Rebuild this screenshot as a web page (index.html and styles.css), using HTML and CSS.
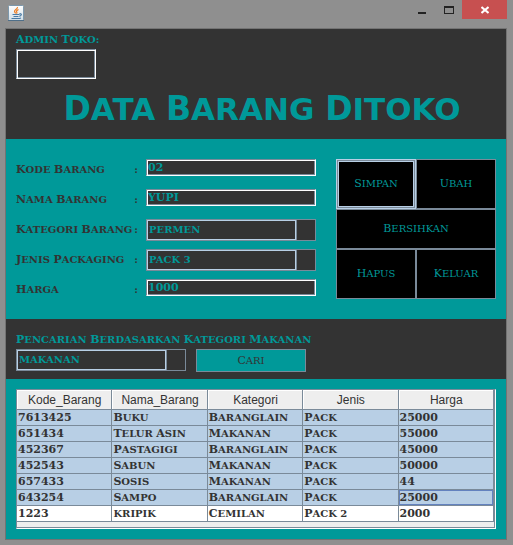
FILE: index.html
```
<!DOCTYPE html>
<html lang="id">
<head>
<meta charset="utf-8">
<title>Data Barang</title>
<link rel="stylesheet" href="styles.css">
</head>
<body>
<div class="titlebar">
  <svg class="java" viewBox="0 0 16 16" role="img" aria-label="Java">
    <defs><linearGradient id="g" x1="0" y1="0" x2="0" y2="1"><stop offset="0" stop-color="#ffffff"/><stop offset="1" stop-color="#cfdde6"/></linearGradient></defs>
    <rect x=".5" y=".5" width="15" height="15" rx="1" fill="url(#g)" stroke="#7d98ac"/>
    <path d="M0 15.5H16" stroke="#4f6f89"/>
    <path d="M9.500 2C10 4 6 5 6.500 6.500C6.700 7.300 7.500 7.800 7.500 8.500M10.500 4.500C8.500 5.500 8 6.200 8.800 7.200C9.200 7.800 8.800 8.300 8.500 8.700" fill="none" stroke="#ee7d22" stroke-width="1.200"/>
    <path d="M4.500 9.500H11.500M5.500 11.500H10.500M11.500 8.700C14.500 8.300 13.500 11 11.300 11.300M3.500 13.500H11.500L13 13" fill="none" stroke="#4a7ba6" stroke-width="1.200"/>
  </svg>
  <div class="controls">
    <button class="ctl" aria-label="Minimize"><svg viewBox="0 0 10 8"><path d="M1 6H9V8H1Z" fill="#222"/></svg></button>
    <button class="ctl" aria-label="Maximize"><svg viewBox="0 0 10 8"><path d="M0 0H10V8H0ZM1 2V7H9V2Z" fill="#222" fill-rule="evenodd"/></svg></button>
    <button class="ctl close" aria-label="Close"><svg viewBox="0 0 8 8"><path d="M.5 1L7.500 7M7.500 1L.5 7" stroke="#fff" stroke-width="2"/></svg></button>
  </div>
</div>
<main class="content">
  <header class="head">
    <label class="caption" for="admin"><span class="w">Admin</span> <span class="w">Toko:</span></label>
    <input class="field admin" id="admin" type="text">
    <h1 class="title"><span class="w">Data</span> <span class="w">Barang</span> <span class="w">Ditoko</span></h1>
  </header>
  <form class="form">
    <div class="fields">
      <div class="row"><label for="kode"><span><span class="w">Kode</span> <span class="w">Barang</span></span><span>:</span></label><input class="field" id="kode" type="text" value="02"></div>
      <div class="row"><label for="nama"><span><span class="w">Nama</span> <span class="w">Barang</span></span><span>:</span></label><input class="field" id="nama" type="text" value="YUPI"></div>
      <div class="row"><label for="kat"><span><span class="w">Kategori</span> <span class="w">Barang</span></span><span>:</span></label><div class="combo"><select id="kat"><option>Permen</option></select></div></div>
      <div class="row"><label for="jenis"><span><span class="w">Jenis</span> <span class="w">Packaging</span></span><span>:</span></label><div class="combo"><select id="jenis"><option>Pack 3</option></select></div></div>
      <div class="row"><label for="harga"><span><span class="w">Harga</span></span><span>:</span></label><input class="field" id="harga" type="text" value="1000"></div>
    </div>
    <div class="actions">
      <button type="button" class="btn focused"><span class="w">Simpan</span></button>
      <button type="button" class="btn"><span class="w">Ubah</span></button>
      <button type="button" class="btn wide"><span class="w">Bersihkan</span></button>
      <button type="button" class="btn"><span class="w">Hapus</span></button>
      <button type="button" class="btn"><span class="w">Keluar</span></button>
    </div>
  </form>
  <section class="search">
    <label class="caption" for="cari"><span class="w">Pencarian</span> <span class="w">Berdasarkan</span> <span class="w">Kategori</span> <span class="w">Makanan</span></label>
    <div class="searchrow">
      <div class="combo"><select id="cari"><option>Makanan</option></select></div>
      <button type="button" class="find"><span class="w">Cari</span></button>
    </div>
  </section>
  <section class="list">
    <div class="pane">
      <table>
        <thead><tr><th>Kode_Barang</th><th>Nama_Barang</th><th>Kategori</th><th>Jenis</th><th>Harga</th></tr></thead>
        <tbody>
          <tr class="sel"><td class="num">7613425</td><td><span class="w">Buku</span></td><td><span class="w">Baranglain</span></td><td><span class="w">Pack</span></td><td class="num">25000</td></tr>
          <tr class="sel"><td class="num">651434</td><td><span class="w">Telur</span> <span class="w">Asin</span></td><td><span class="w">Makanan</span></td><td><span class="w">Pack</span></td><td class="num">55000</td></tr>
          <tr class="sel"><td class="num">452367</td><td><span class="w">Pastagigi</span></td><td><span class="w">Baranglain</span></td><td><span class="w">Pack</span></td><td class="num">45000</td></tr>
          <tr class="sel"><td class="num">452543</td><td><span class="w">Sabun</span></td><td><span class="w">Makanan</span></td><td><span class="w">Pack</span></td><td class="num">50000</td></tr>
          <tr class="sel"><td class="num">657433</td><td><span class="w">Sosis</span></td><td><span class="w">Makanan</span></td><td><span class="w">Pack</span></td><td class="num">44</td></tr>
          <tr class="sel"><td class="num">643254</td><td><span class="w">Sampo</span></td><td><span class="w">Baranglain</span></td><td><span class="w">Pack</span></td><td class="num lead">25000</td></tr>
          <tr><td class="num">1223</td><td>kripik</td><td><span class="w">Cemilan</span></td><td><span class="w">Pack</span> 2</td><td class="num">2000</td></tr>
        </tbody>
      </table>
    </div>
  </section>
</main>
</body>
</html>
```
FILE: styles.css
```
:root {
  --teal: #009999;
  --dark: #333333;
  --line: #7a8a99;
  --pale: #b8cfe5;
}
* { box-sizing: border-box; }
body {
  margin: 0;
  min-height: 100vh;
  padding: 0 6px 5px 5px;
  display: flex;
  flex-direction: column;
  background: #8f8f8f;
  font: bold 10px/18px "DejaVu Serif", serif;
  color: var(--dark);
}
button, input, select {
  font: inherit;
  border-radius: 0;
  margin: 0;
  padding: 0;
}
.titlebar {
  height: 28px;
  display: flex;
  justify-content: space-between;
  padding-left: 3px;
}
.java { width: 16px; height: 16px; margin-top: 5px; }
.controls { display: flex; height: 19px; }
.ctl {
  width: 27px;
  border: 0;
  background: none;
  display: flex;
  align-items: center;
  justify-content: center;
}
.ctl svg { width: 10px; height: 8px; }
.close { width: 45px; background: #c75050; }
.close svg { width: 8px; }
.content {
  flex: 1;
  display: flex;
  flex-direction: column;
  border: 1px solid #737373;
  background: var(--teal);
  text-transform: uppercase;
}
.w { display: inline-block; }
.w::first-letter { font-size: 11px; }
.caption { display: block; color: var(--teal); }
.head {
  height: 110px;
  padding: 2px 10px;
  background: var(--dark);
}
.field {
  display: block;
  flex: 1;
  min-width: 0;
  height: 17px;
  background: var(--dark);
  color: var(--teal);
  font-size: 11px;
  line-height: 13px;
  border: 1px solid;
  border-color: var(--line) #fff #fff var(--line);
  box-shadow: inset 1px 1px #fff, inset -1px -1px var(--line);
  padding-left: 1px;
}
.admin { width: 80px; height: 30px; }
.title {
  margin: 13px 0 0;
  padding-left: 12px;
  font: bold 31px/34px "DejaVu Sans", sans-serif;
  text-align: center;
  color: var(--teal);
  white-space: nowrap;
}
.title .w::first-letter { font-size: 33px; }
.form {
  display: flex;
  gap: 20px;
  padding: 20px 10px 10px;
}
.fields { flex: 1; }
.row { display: flex; height: 30px; gap: 8px; align-items: flex-start; }
.row label {
  width: 122px;
  display: flex;
  justify-content: space-between;
  line-height: 22px;
  white-space: nowrap;
}
.combo {
  flex: 1;
  height: 22px;
  display: flex;
  padding-right: 19px;
  border: 1px solid var(--line);
  background: var(--dark);
}
.combo select {
  appearance: none;
  flex: 1;
  min-width: 0;
  background: var(--dark);
  color: var(--teal);
  border: 1px solid var(--pale);
  box-shadow: 1px 0 var(--line);
  padding-left: 1px;
  line-height: 18px;
  text-transform: uppercase;
}
.actions {
  width: 160px;
  height: 140px;
  display: grid;
  grid-template-columns: 1fr 1fr;
  grid-template-rows: 50px 40px 50px;
}
.btn, .find {
  border: 1px solid var(--line);
  background: #000;
  color: var(--teal);
  font-weight: normal;
  text-transform: uppercase;
}
.wide { grid-column: span 2; }
.focused {
  border-color: var(--pale);
  box-shadow: inset 0 0 0 1px var(--line), inset 0 0 0 2px var(--pale);
}
.search {
  height: 60px;
  padding: 12px 10px 0;
  background: var(--dark);
}
.searchrow { display: flex; gap: 10px; }
.searchrow .combo { flex: 0 0 170px; }
.find {
  width: 110px;
  height: 23px;
  background: var(--teal);
  color: var(--dark);
}
.list { flex: 1; padding: 10px; display: flex; }
.pane {
  flex: 1;
  background: #eee;
  border: 1px solid;
  border-color: var(--line) #fff #fff var(--line);
  box-shadow: inset -1px -1px var(--line);
  padding-right: 1px;
}
table {
  width: 100%;
  table-layout: fixed;
  border-collapse: separate;
  border-spacing: 0;
}
th, td {
  padding: 0 0 0 1px;
  border-right: 1px solid var(--line);
  border-bottom: 1px solid var(--line);
  white-space: nowrap;
}
th {
  height: 20px;
  padding-top: 1px;
  font: 12px/18px "Liberation Sans", sans-serif;
  text-transform: none;
  text-align: center;
  box-shadow: inset 1px 1px #fff;
}
td {
  height: 16px;
  line-height: 15px;
  background: #fff;
}
.num { font-size: 11px; }
.sel td { background: var(--pale); }
.sel .lead { box-shadow: inset 0 0 0 1px #6382bf; }
```
